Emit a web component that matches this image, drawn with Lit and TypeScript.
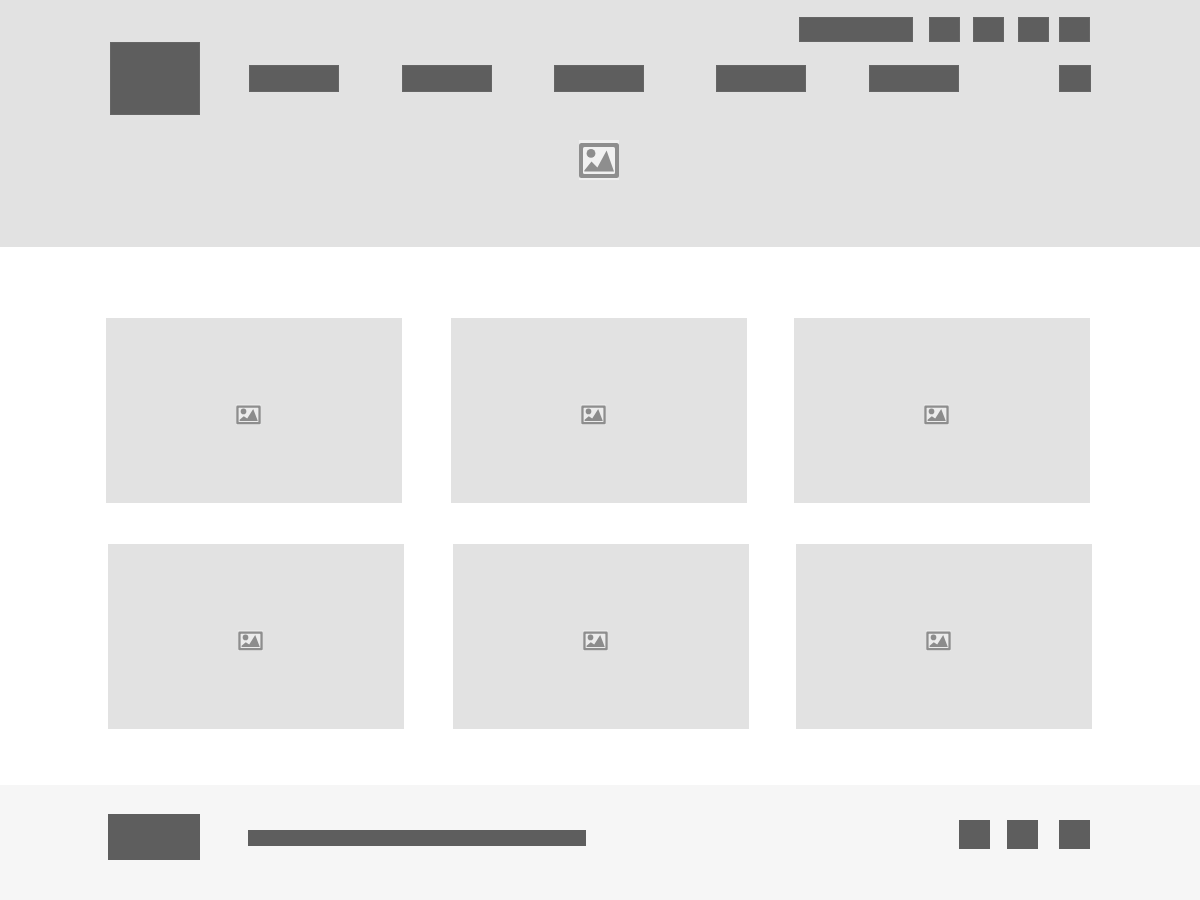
import { LitElement, html, css } from "lit";
import { customElement } from "lit/decorators.js";

@customElement("hero-picture")
class HeroPicture extends LitElement {
  static styles = css`
    :host { display: block; }
    .icon { display: block; width: 42px; height: 40px; }
  `;
  render() {
    return html`<svg class="icon" viewBox="0 0 42 40" aria-hidden="true">
      <rect width="40" height="40" fill="#efefef" />
      <rect y="3" width="40" height="35" rx="2.5" fill="#8e8e8e" />
      <rect x="4" y="7" width="32" height="27" rx="1.5" fill="#f1f1f1" />
      <circle cx="12" cy="13.4" r="4.4" fill="#8e8e8e" />
      <path d="M5.3 31.5V30.6L12.5 21.6L18.4 27.6L27.6 10.6L35 31.5Z" fill="#8e8e8e" />
    </svg>`;
  }
}

@customElement("card-picture")
class CardPicture extends LitElement {
  static styles = css`
    :host { display: block; }
    .icon { display: block; width: 25px; height: 20px; overflow: visible; }
  `;
  render() {
    return html`<svg class="icon" viewBox="0 0 25 20" aria-hidden="true">
      <rect x="0" y="-1" width="25" height="21" fill="#e9e9e9" />
      <rect x="0.3" y="0.6" width="24.4" height="18.6" rx="1.3" fill="#8e8e8e" />
      <rect x="2.6" y="2.8" width="19.8" height="14.2" rx="0.6" fill="#ececec" />
      <circle cx="7.5" cy="6.4" r="2.8" fill="#8c8c8c" />
      <path d="M3.6 16V14.8L7.8 11.2L11.2 13.6L17.2 4L21.8 16Z" fill="#8c8c8c" />
    </svg>`;
  }
}

@customElement("app-root")
class AppRoot extends LitElement {
  static styles = css`
    :host {
      display: flex;
      flex-direction: column;
      min-height: 100vh;
      background: #ffffff;
      font-family: "Liberation Sans", Arial, sans-serif;
    }
    .header {
      display: flex;
      flex-direction: column;
      align-items: center;
      gap: 25px;
      padding: 17px 0 67px;
      background: #e2e2e2;
    }
    .bar {
      display: grid;
      grid-template-columns: 90px 1fr;
      column-gap: 49px;
      align-self: stretch;
      padding: 0 109px 0 110px;
    }
    .block {
      display: block;
      box-sizing: border-box;
      margin: 0;
      padding: 0;
      background: #5e5e5e;
      border: 0 solid #666666;
    }
    .header .block { border-width: 1px; }
    .logo { height: 73px; margin-top: 25px; }
    .menus { display: flex; flex-direction: column; gap: 23px; }
    .utility {
      display: grid;
      grid-template-columns: 130px 44px 45px 41px 31px;
      justify-content: end;
      padding-right: 1px;
    }
    .square { width: 31px; height: 25px; }
    .account { width: 114px; height: 25px; }
    .nav {
      display: grid;
      grid-template-columns: 153fr 152fr 162fr 153fr 190fr 32px;
    }
    .item { width: 90px; height: 27px; }
    .search { width: 32px; height: 27px; }
    .main {
      display: flex;
      flex-direction: column;
      gap: 41px;
      padding: 71px 0 56px;
    }
    .row {
      display: grid;
      grid-template-columns: 296fr 49fr 296fr 47fr 296fr;
      padding: 0 110px 0 106px;
    }
    .row:last-child { padding: 0 108px; }
    .card {
      display: flex;
      align-items: center;
      justify-content: center;
      box-sizing: border-box;
      height: 185px;
      padding: 9px 11px 0 0;
      background: #e2e2e2;
    }
    .card:nth-child(2) { grid-column: 3; }
    .card:nth-child(3) { grid-column: 5; }
    .footer {
      display: flex;
      flex: 1;
      align-items: flex-start;
      gap: 48px;
      padding: 29px 110px 40px 108px;
      background: #f6f6f6;
    }
    .mark { width: 92px; height: 46px; }
    .line { width: 338px; height: 16px; margin-top: 16px; }
    .social {
      display: grid;
      grid-template-columns: 48px 52px 31px;
      margin: 6px 0 0 auto;
    }
    .social .square { height: 29px; }
  `;

  render() {
    return html`
      <header class="header">
        <div class="bar">
          <a class="block logo" href="#" aria-label="Home"></a>
          <div class="menus">
            <div class="utility">
              <a class="block account" href="#" aria-label="Account"></a>
              ${[1, 2, 3, 4].map((n) => html`<a class="block square" href="#" aria-label="Quick link ${n}"></a>`)}
            </div>
            <nav class="nav" aria-label="Main">
              ${[1, 2, 3, 4, 5].map((n) => html`<a class="block item" href="#" aria-label="Section ${n}"></a>`)}
              <button class="block search" type="button" aria-label="Search"></button>
            </nav>
          </div>
        </div>
        <hero-picture></hero-picture>
      </header>
      <main class="main">
        ${[0, 1].map(
          () => html`<section class="row">
            ${[0, 1, 2].map(() => html`<article class="card"><card-picture></card-picture></article>`)}
          </section>`
        )}
      </main>
      <footer class="footer">
        <a class="block mark" href="#" aria-label="Home"></a>
        <div class="block line"></div>
        <div class="social">
          ${[1, 2, 3].map((n) => html`<a class="block square" href="#" aria-label="Social link ${n}"></a>`)}
        </div>
      </footer>
    `;
  }
}
